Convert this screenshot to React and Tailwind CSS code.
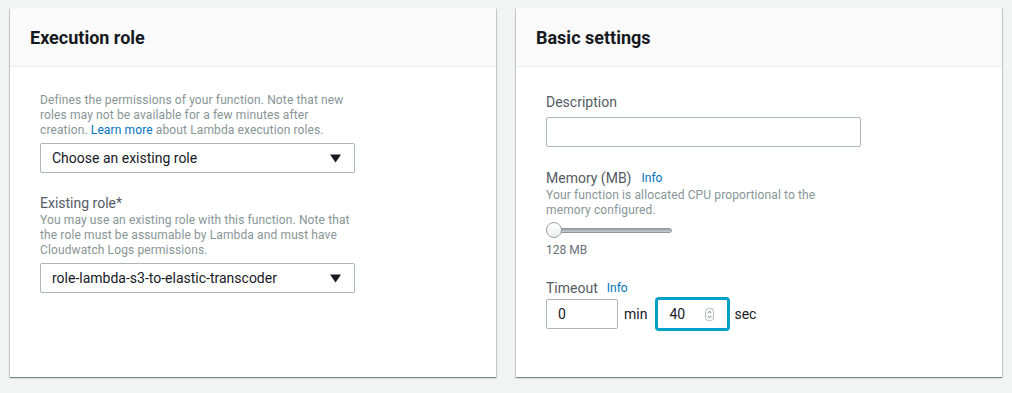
import React from 'react';

const font = { fontFamily: 'Roboto, "Liberation Sans", sans-serif' };

const Caret = () => (
  <svg width="11" height="9" viewBox="0 0 11 9" className="shrink-0">
    <path d="M0 0.5 H11 L5.5 8.5 Z" fill="#16191f" />
  </svg>
);

const Select = ({ value }) => (
  <div className="mt-[5px] flex h-[30px] w-[315px] items-center justify-between rounded-[2px] border border-[#aab7b8] bg-white pl-[11px] pr-[13px] text-[14px] text-[#16191f]">
    <span>{value}</span>
    <Caret />
  </div>
);

const Spinner = () => (
  <svg width="9" height="13" viewBox="0 0 9 13">
    <rect x="0.5" y="0.5" width="8" height="12" rx="3" fill="#fafafa" stroke="#b7bdbf" />
    <path d="M2.8 5 L4.5 3.2 L6.2 5" fill="none" stroke="#687078" strokeWidth="0.9" />
    <path d="M2.8 8 L4.5 9.8 L6.2 8" fill="none" stroke="#687078" strokeWidth="0.9" />
  </svg>
);

const Card = ({ title, children }) => (
  <div className="flex h-[369px] w-[486px] flex-col bg-white shadow-[0_1px_1px_0_rgba(0,28,36,0.3),1px_1px_1px_0_rgba(0,28,36,0.15),-1px_1px_1px_0_rgba(0,28,36,0.15)]">
    <div className="flex h-[59px] shrink-0 items-center border-b border-[#eaeded] bg-[#fafafa] px-5">
      <h2 className="text-[18px] font-bold text-[#16191f]">{title}</h2>
    </div>
    <div className="flex-1 px-[30px]">{children}</div>
  </div>
);

const Info = ({ className = '' }) => (
  <span className={`text-[12px] text-[#0073bb] ${className}`}>Info</span>
);

export default function App() {
  return (
    <div className="flex h-[393px] w-full gap-5 bg-[#f2f3f3] px-[10px] pt-2" style={font}>
      <Card title="Execution role">
        <p className="pt-[26px] text-[12px] leading-[15px] tracking-[0.12px] text-[#879596]">
          Defines the permissions of your function. Note that new<br />
          roles may not be available for a few minutes after<br />
          creation. <span className="text-[#0073bb]">Learn more</span> about Lambda execution roles.
        </p>
        <Select value="Choose an existing role" />
        <div className="mt-5 text-[14px] leading-[20px] text-[#545b64]">Existing role*</div>
        <p className="text-[12px] leading-[15px] tracking-[0.12px] text-[#879596]">
          You may use an existing role with this function. Note that<br />
          the role must be assumable by Lambda and must have<br />
          Cloudwatch Logs permissions.
        </p>
        <Select value="role-lambda-s3-to-elastic-transcoder" />
      </Card>

      <Card title="Basic settings">
        <div className="pt-[25px] text-[14px] leading-[20px] text-[#545b64]">Description</div>
        <div className="mt-[5px] h-[30px] w-[315px] rounded-[2px] border border-[#aab7b8] bg-white" />

        <div className="mt-[21px] flex items-center text-[14px] leading-[20px] text-[#545b64]">
          <span>Memory (MB)</span>
          <Info className="ml-[10px]" />
        </div>
        <p className="text-[12px] leading-[15px] tracking-[0.12px] text-[#879596]">
          Your function is allocated CPU proportional to the<br />
          memory configured.
        </p>
        <div className="relative mt-[4px] flex h-[16px] w-[126px] items-center">
          <div className="h-[5px] w-full rounded-full border border-[#8f979a] bg-gradient-to-b from-[#9aa2a5] to-[#c9cfd1]" />
          <div className="absolute left-0 top-0 h-[16px] w-[16px] rounded-full border border-[#9aa2a5] bg-gradient-to-b from-white to-[#eceeef]" />
        </div>
        <div className="mt-[5px] text-[12px] leading-[15px] text-[#687078]">128 MB</div>

        <div className="mt-[20px] flex items-center text-[14px] leading-[20px] text-[#545b64]">
          <span>Timeout</span>
          <Info className="ml-[9px]" />
        </div>
        <div className="mt-[1px] flex items-center text-[14px] text-[#16191f]">
          <div className="flex h-[30px] w-[72px] items-center rounded-[2px] border border-[#aab7b8] bg-white pl-[11px]">0</div>
          <span className="ml-[6px]">min</span>
          <div className="ml-[10px] flex h-[30px] w-[71px] items-center justify-between rounded-[2px] border border-[#00a1c9] bg-white pl-[11px] pr-[13px] shadow-[0_0_0_2px_#00a1c9]">
            <span>40</span>
            <Spinner />
          </div>
          <span className="ml-[6px]">sec</span>
        </div>
      </Card>
    </div>
  );
}
